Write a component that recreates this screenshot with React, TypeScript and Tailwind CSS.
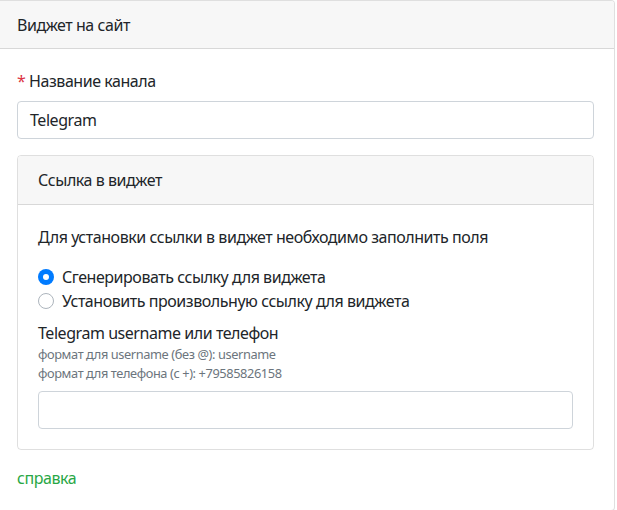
import React from "react";

export default function App() {
  return (
    <div className="w-[617px] h-[510px] overflow-hidden bg-white text-[#212529] text-[16px] leading-[24px] tracking-[-0.45px]" style={{ fontFamily: '"Noto Sans", "Open Sans", sans-serif' }}>
      <div className="ml-[-4px] w-[619px] border border-[rgba(0,0,0,0.125)] rounded-[4px] bg-white">
        <div className="px-[20px] pt-[12px] pb-[11px] bg-[#f7f7f7] border-b border-[rgba(0,0,0,0.125)] rounded-t-[3px]">
          Виджет на сайт
        </div>
        <div className="p-[20px]">
          <div className="mb-[8px]">
            <span className="text-[#dc3545]">*</span> Название канала
          </div>
          <div className="h-[38px] border border-[#ced4da] rounded-[4px] px-[12px] flex items-center mb-[16px]">
            Telegram
          </div>
          <div className="border border-[rgba(0,0,0,0.125)] rounded-[4px]">
            <div className="px-[20px] py-[12px] bg-[#f7f7f7] border-b border-[rgba(0,0,0,0.125)] rounded-t-[3px]">
              Ссылка в виджет
            </div>
            <div className="p-[20px]">
              <p className="mb-[16px]">Для установки ссылки в виджет необходимо заполнить поля</p>
              <div className="flex items-center">
                <span className="w-[16px] h-[16px] rounded-full bg-[#007bff] flex items-center justify-center mr-[8px]">
                  <span className="w-[6px] h-[6px] rounded-full bg-white" />
                </span>
                Сгенерировать ссылку для виджета
              </div>
              <div className="flex items-center mb-[8px]">
                <span className="w-[16px] h-[16px] rounded-full border border-[#adb5bd] bg-white mr-[8px]" />
                Установить произвольную ссылку для виджета
              </div>
              <div>Telegram username или телефон</div>
              <div className="text-[12.8px] leading-[19.2px] tracking-[-0.4px] text-[#6c757d]">формат для username (без @): username</div>
              <div className="text-[12.8px] leading-[19.2px] tracking-[-0.4px] text-[#6c757d]">формат для телефона (с +): +79585826158</div>
              <div className="mt-[8px] h-[38px] border border-[#ced4da] rounded-[4px]" />
            </div>
          </div>
          <div className="mt-[16px] text-[#28a745]">справка</div>
        </div>
      </div>
    </div>
  );
}
